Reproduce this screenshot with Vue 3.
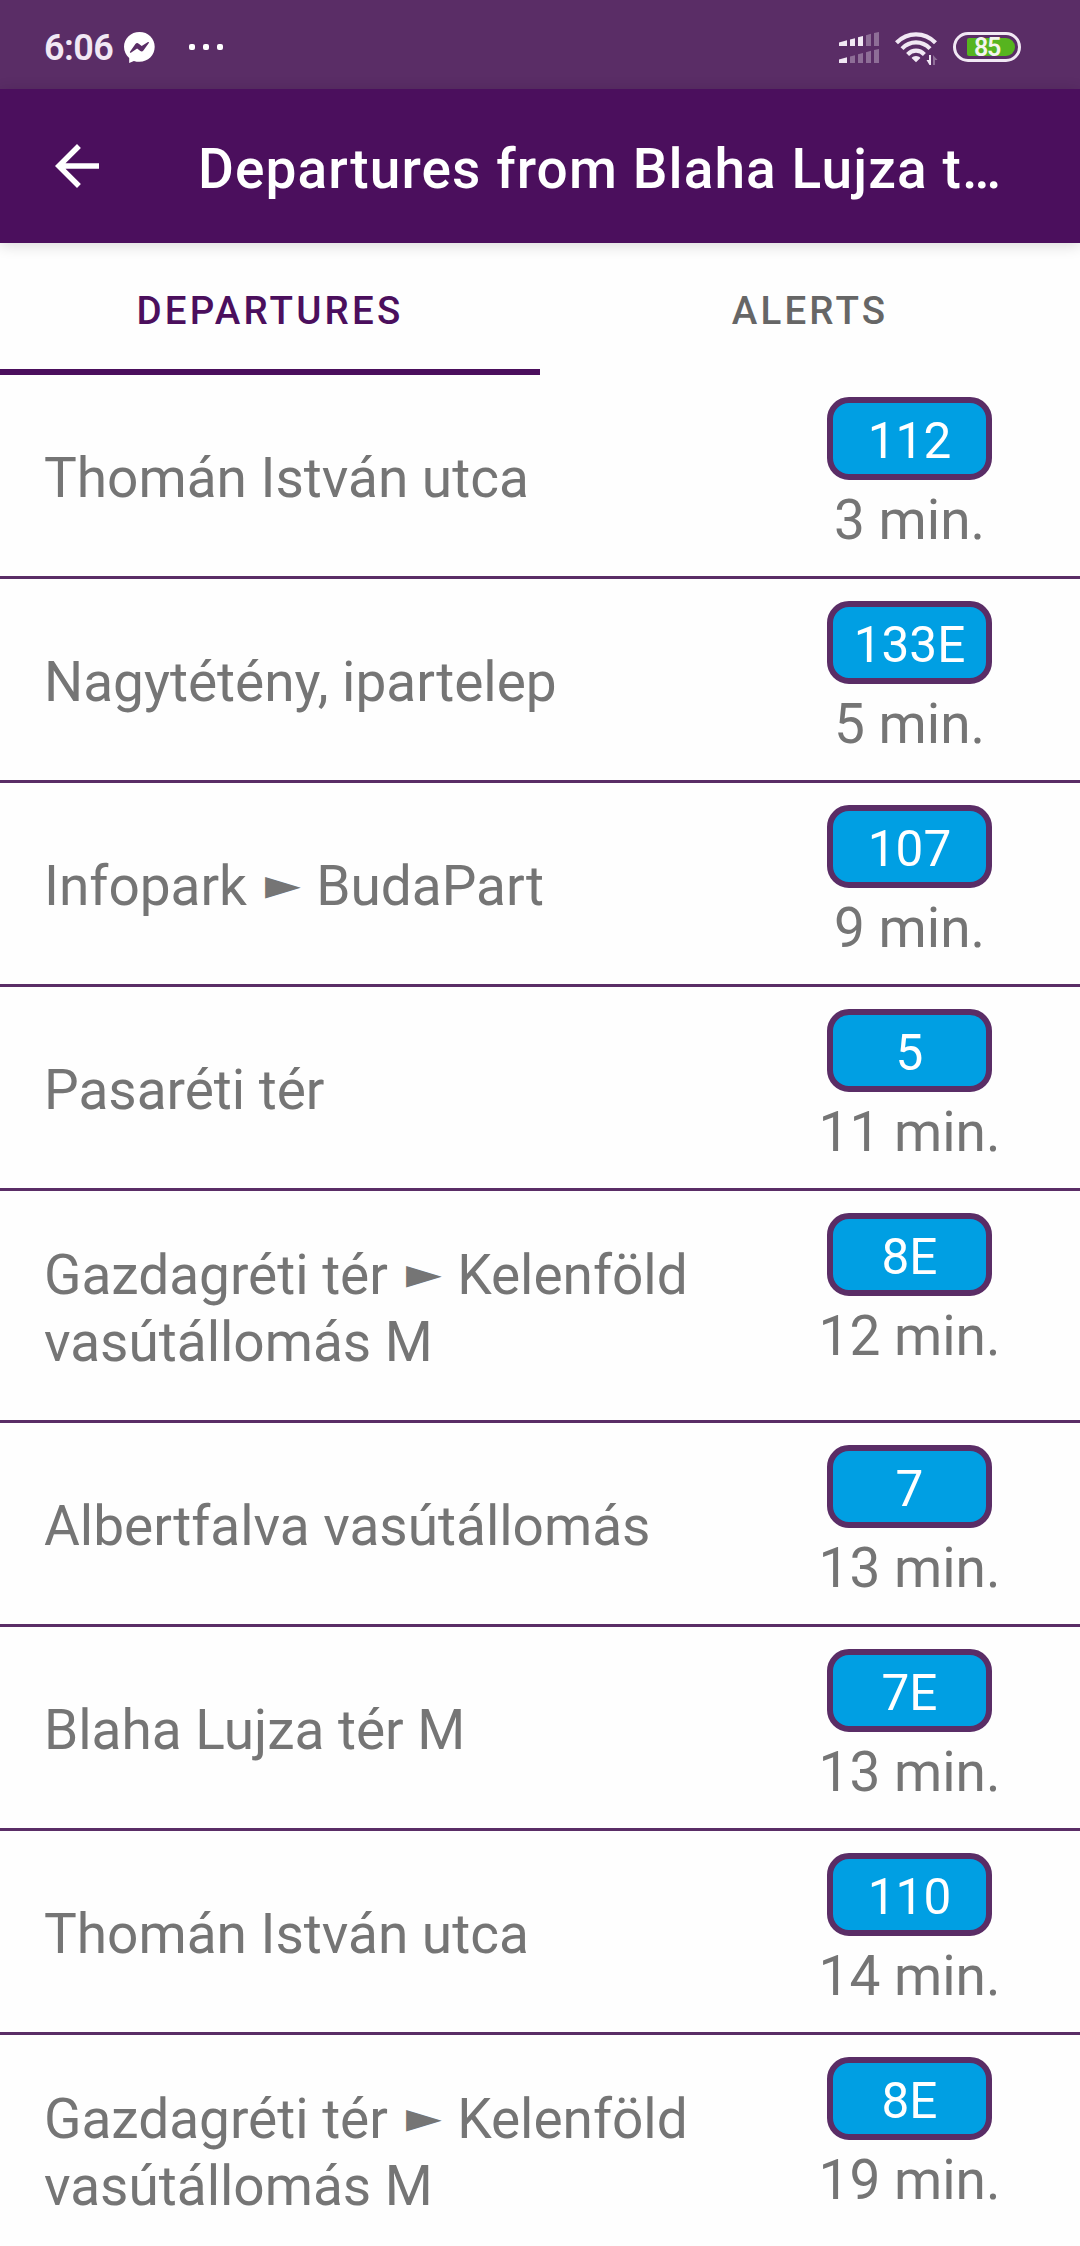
<script setup>
const departures = [
  { stops: ['Thomán István utca'], line: '112', minutes: 3 },
  { stops: ['Nagytétény, ipartelep'], line: '133E', minutes: 5 },
  { stops: ['Infopark', 'BudaPart'], line: '107', minutes: 9 },
  { stops: ['Pasaréti tér'], line: '5', minutes: 11 },
  { stops: ['Gazdagréti tér', 'Kelenföld vasútállomás M'], line: '8E', minutes: 12 },
  { stops: ['Albertfalva vasútállomás'], line: '7', minutes: 13 },
  { stops: ['Blaha Lujza tér M'], line: '7E', minutes: 13 },
  { stops: ['Thomán István utca'], line: '110', minutes: 14 },
  { stops: ['Gazdagréti tér', 'Kelenföld vasútállomás M'], line: '8E', minutes: 19 },
]
</script>

<template>
  <div class="screen">
    <header class="status">
      <span class="clock">6:06</span>
      <svg class="messenger" width="31" height="32" viewBox="0 0 31 32">
        <path fill="#fff" d="M15.500 0C7 0 0 6.300 0 14.800c0 4.600 2 8.500 5.200 11.200V31l4.700-2.100c1.800.6 3.600.9 5.600.9 8.600 0 15.200-6.500 15.200-15S24.100 0 15.500 0z" />
        <path fill="#5a2d66" d="M6 19.800l5.400-7.700c.9-1.200 2.200-1.300 3.300-.4l3 2.400 6.300-4c.6-.4 1.200.2.8.8l-5.400 7.600c-.8 1.100-2 1.300-3.100.5l-3.200-2.500-6.200 4.200c-.6.400-1.300-.3-.9-.9z" />
      </svg>
      <span class="dots"><i></i><i></i><i></i></span>
      <span class="spacer"></span>
      <svg class="signal" width="40" height="32" viewBox="0 0 40 32" fill="#f1e8f4">
        <path d="M0 10.500L8 8.300V14H0z M11 7.600L16 6.200V14H11z M19 5.300L24 4V14H19z" />
        <path opacity=".35" d="M27 3.200L32 1.800V14H27z M35 1L40 0V14H35z" />
        <path d="M0 27.500L8 25.300V31H0z" />
        <path opacity=".35" d="M11 24.600L16 23.200V31H11z M19 22.300L24 21V31H19z M27 20.200L32 18.800V31H27z M35 18L40 17V31H35z" />
      </svg>
      <svg class="wifi" width="43" height="34" viewBox="0 0 43 34">
        <g fill="none" stroke="#f1e8f4" stroke-width="4.200">
          <path d="M1.500 10.700C12.500-.500 29.500-.500 40.500 10.700" />
          <path d="M7 16.600c8-8.200 20-8.200 28 0" />
          <path d="M12.600 22.400c5-5 11.800-5 16.800 0" />
        </g>
        <path fill="#f1e8f4" d="M21 24c1.800 0 3.300.7 4.400 1.900L21 30.300l-4.400-4.400C17.700 24.700 19.200 24 21 24z" />
        <path fill="#f1e8f4" d="M34 23h2v10h-1.500l-3-5H34z" />
        <path fill="#f1e8f4" opacity=".35" d="M38 33V23l4.500 5H40v5z" />
      </svg>
      <span class="battery"><span class="charge">85</span></span>
    </header>

    <nav class="appbar">
      <svg class="back" width="66" height="66" viewBox="0 0 24 24">
        <path fill="#fff" d="M20 11H7.830l5.590-5.590L12 4l-8 8 8 8 1.410-1.410L7.830 13H20v-2z" />
      </svg>
      <h1>Departures from Blaha Lujza t…</h1>
    </nav>

    <div class="tabs">
      <button class="tab active">DEPARTURES</button>
      <button class="tab">ALERTS</button>
    </div>

    <ul class="list">
      <li v-for="(d, i) in departures" :key="i" class="row">
        <p class="name">
          <template v-for="(stop, j) in d.stops" :key="j"><template v-if="j">{{ ' ' }}<span class="arrow">►</span>{{ ' ' }}</template>{{ stop }}</template>
        </p>
        <div class="info">
          <span class="badge">{{ d.line }}</span>
          <span class="time">{{ d.minutes }} min.</span>
        </div>
      </li>
    </ul>
  </div>
</template>

<style>
body {
  margin: 0;
  background: #fff;
}
</style>

<style scoped>
.screen {
  display: flex;
  flex-direction: column;
  width: 1080px;
  height: 2246px;
  overflow: hidden;
  background: #fefefe;
  font-family: Roboto, "Noto Sans", sans-serif;
}
.status {
  display: flex;
  flex: none;
  align-items: flex-start;
  box-sizing: border-box;
  height: 89px;
  padding: 32px 59px 0 44px;
  background: #5a2d66;
}
.clock {
  width: 80px;
  color: #f1e8f4;
  font-size: 36px;
  font-weight: 600;
  line-height: 33px;
  letter-spacing: -0.6px;
}
.dots {
  display: flex;
  gap: 8px;
  margin: 12px 0 0 34px;
}
.dots i {
  width: 6px;
  height: 6px;
  border-radius: 2px;
  background: #fff;
}
.spacer {
  flex: 1;
}
.wifi {
  margin: 0 15px 0 16px;
}
.battery {
  box-sizing: border-box;
  width: 68px;
  height: 30px;
  padding: 3px 3px 3px 11px;
  border: 3px solid #f1e8f4;
  border-radius: 15px;
}
.charge {
  display: block;
  box-sizing: border-box;
  width: 48px;
  height: 18px;
  padding-right: 8px;
  border-radius: 2px 9px 9px 2px;
  background: #56b41f;
  color: #f4f4ee;
  font-size: 25px;
  font-weight: 600;
  line-height: 19px;
  letter-spacing: -1.4px;
  text-align: center;
}
.appbar {
  display: flex;
  flex: none;
  align-items: center;
  position: relative;
  height: 154px;
  padding-left: 44px;
  background: #4b0f5d;
  box-shadow: 0 2px 14px rgba(0, 0, 0, 0.16);
}
.appbar h1 {
  margin: 7px 0 0 88px;
  color: #fff;
  font-size: 55px;
  font-weight: 500;
  line-height: 65px;
  letter-spacing: 1.11px;
  white-space: nowrap;
}
.tabs {
  display: flex;
  flex: none;
  height: 132px;
}
.tab {
  flex: 1;
  padding: 8px 0 0;
  border: 0;
  border-bottom: 6px solid transparent;
  background: none;
  color: #666;
  font: 500 38.5px/45px Roboto, "Noto Sans", sans-serif;
  letter-spacing: 3.2px;
}
.tab.active {
  border-bottom-color: #4b0f5d;
  color: #4b0f5d;
}
.list {
  margin: 0;
  padding: 0;
  list-style: none;
}
.row {
  display: flex;
  align-items: center;
  box-sizing: border-box;
  min-height: 204px;
  border-bottom: 3px solid #5a2d66;
  color: #757575;
  font-size: 55px;
}
.name {
  flex: 1;
  box-sizing: border-box;
  margin: 0;
  padding: 50.6px 22px 44.4px 44px;
  line-height: 67px;
  letter-spacing: -0.02px;
}
.arrow {
  display: inline-block;
  width: 42px;
  font-family: "Liberation Sans", sans-serif;
  font-size: 36px;
  line-height: 36px;
  text-align: center;
  transform: translate(1px, -7px) scaleX(1.65);
}
.info {
  display: flex;
  flex: none;
  flex-direction: column;
  align-items: center;
  align-self: flex-start;
  width: 341px;
  padding-top: 22px;
}
.badge {
  box-sizing: border-box;
  width: 165px;
  height: 83px;
  border: 6px solid #5a2d66;
  border-radius: 22px;
  background: #009fe3;
  color: #fff;
  font-size: 49.5px;
  line-height: 76px;
  text-align: center;
}
.time {
  margin-top: 8px;
  line-height: 65px;
}
</style>
